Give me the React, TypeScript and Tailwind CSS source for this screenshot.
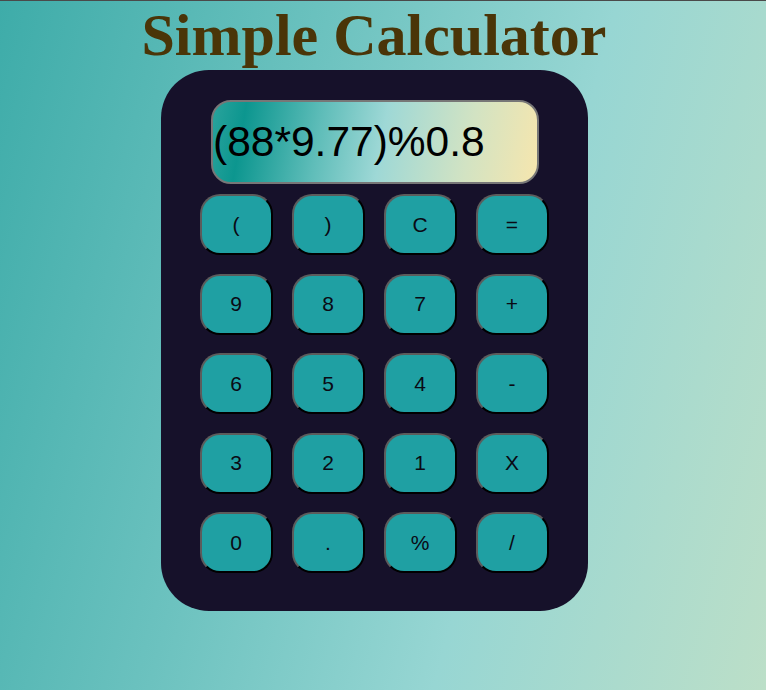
import React, { useState } from 'react';

const KEYS = ['(', ')', 'C', '=', '9', '8', '7', '+', '6', '5', '4', '-', '3', '2', '1', 'X', '0', '.', '%', '/'];

export default function App() {
  const [expr, setExpr] = useState('(88*9.77)%0.8');

  const press = (k: string) => {
    if (k === 'C') return setExpr('');
    if (k === '=') {
      try {
        // eslint-disable-next-line no-new-func
        setExpr(String(Function(`return (${expr.replace(/X/g, '*')})`)()));
      } catch {
        setExpr('Error');
      }
      return;
    }
    setExpr(expr + k);
  };

  return (
    <div className="min-h-[690px] border-t border-[#4a4a4a] bg-[linear-gradient(105deg,#3eaca9_0%,#6cc2bf_35%,#97d6d3_65%,#bcdfc8_100%)]">
      <div className="w-[748px] flex flex-col items-center">
        <h1 className="m-0 leading-[69px] text-[60px] font-bold text-[#4a3508] font-['Liberation_Serif',serif]">
          Simple Calculator
        </h1>
        <div className="w-[427px] h-[541px] rounded-[48px] bg-[#16112a] flex flex-col items-center pt-[30px]">
          <div className="ml-[2px] w-[328px] h-[84px] rounded-[20px] border-2 border-[#777777] bg-[linear-gradient(100deg,#2aa39c_0%,#0c968f_10%,#5fbdb9_33%,#9ed8d6_52%,#d2e3c3_78%,#f6e6ae_100%)] flex items-center overflow-hidden">
            <span className="text-[42.5px] text-black font-['Liberation_Sans',Arial,sans-serif] whitespace-nowrap">{expr}</span>
          </div>
          <div className="mt-[10px] grid grid-cols-[repeat(4,73px)] gap-x-[19px] gap-y-[18.5px]">
            {KEYS.map((k) => (
              <button
                key={k}
                onClick={() => press(k)}
                className="h-[61px] rounded-[20px] border-2 border-t-[#5c5c5c] border-l-[#5c5c5c] border-b-black border-r-black bg-[#1fa0a3] text-[21px] text-[#0a0a14] font-['Liberation_Sans',Arial,sans-serif]"
              >
                {k}
              </button>
            ))}
          </div>
        </div>
      </div>
    </div>
  );
}
